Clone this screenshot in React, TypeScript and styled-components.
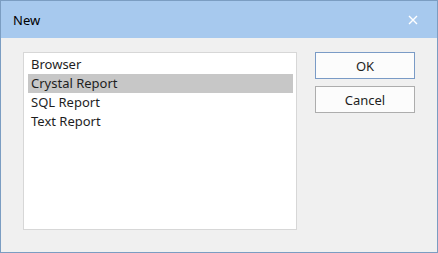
import React, { useState } from 'react';
import styled, { createGlobalStyle } from 'styled-components';

const GlobalStyle = createGlobalStyle`
  html, body {
    margin: 0;
    padding: 0;
    background: #f0f0f0;
  }

  body {
    font-family: 'Segoe UI', 'Noto Sans', sans-serif;
    font-size: 13px;
  }
`;

const Window = styled.div`
  box-sizing: border-box;
  width: 438px;
  height: 253px;
  border: 1px solid #7b9dc2;
  background: #f0f0f0;
  display: flex;
  flex-direction: column;
`;

const TitleBar = styled.div`
  height: 37px;
  background: #a7c9ee;
  display: flex;
  align-items: center;
  justify-content: space-between;
  padding: 0 13px 0 12px;
  color: #000;
`;

const Title = styled.span`
  margin-top: 1px;
`;

const CloseIcon = styled.svg`
  width: 10px;
  height: 10px;
  margin-right: 6px;
`;

const Body = styled.div`
  flex: 1;
  display: flex;
  align-items: flex-start;
  padding: 14px 0 0 22px;
  gap: 18px;
`;

const ListBox = styled.ul`
  box-sizing: border-box;
  list-style: none;
  margin: 0;
  width: 274px;
  height: 178px;
  padding: 2px 3px 0 4px;
  background: #fff;
  border: 1px solid #d7d7d7;
`;

const ListItem = styled.li<{ $selected: boolean }>`
  height: 19px;
  line-height: 19px;
  padding-left: 3px;
  color: #1e1e1e;
  background: ${(p) => (p.$selected ? '#c7c7c7' : 'transparent')};
  cursor: default;
`;

const Buttons = styled.div`
  display: flex;
  flex-direction: column;
  gap: 7px;
`;

const Button = styled.button<{ $default?: boolean }>`
  box-sizing: border-box;
  width: 100px;
  height: 27px;
  padding: 0;
  font: inherit;
  color: #1e1e1e;
  background: #fcfcfc;
  border: 1px solid ${(p) => (p.$default ? '#7a9bc6' : '#adadad')};
`;

const items = ['Browser', 'Crystal Report', 'SQL Report', 'Text Report'];

export default function App () {
  const [selected, setSelected] = useState(1);

  return (
    <>
      <GlobalStyle />
      <Window>
        <TitleBar>
          <Title>New</Title>
          <CloseIcon viewBox='0 0 10 10'>
            <path d='M1 1 L9 9 M9 1 L1 9' stroke='#fff' strokeWidth='1.4' />
          </CloseIcon>
        </TitleBar>
        <Body>
          <ListBox>
            {items.map((item, index) => (
              <ListItem
                key={item}
                $selected={index === selected}
                onClick={() => setSelected(index)}
              >
                {item}
              </ListItem>
            ))}
          </ListBox>
          <Buttons>
            <Button $default>OK</Button>
            <Button>Cancel</Button>
          </Buttons>
        </Body>
      </Window>
    </>
  );
}
